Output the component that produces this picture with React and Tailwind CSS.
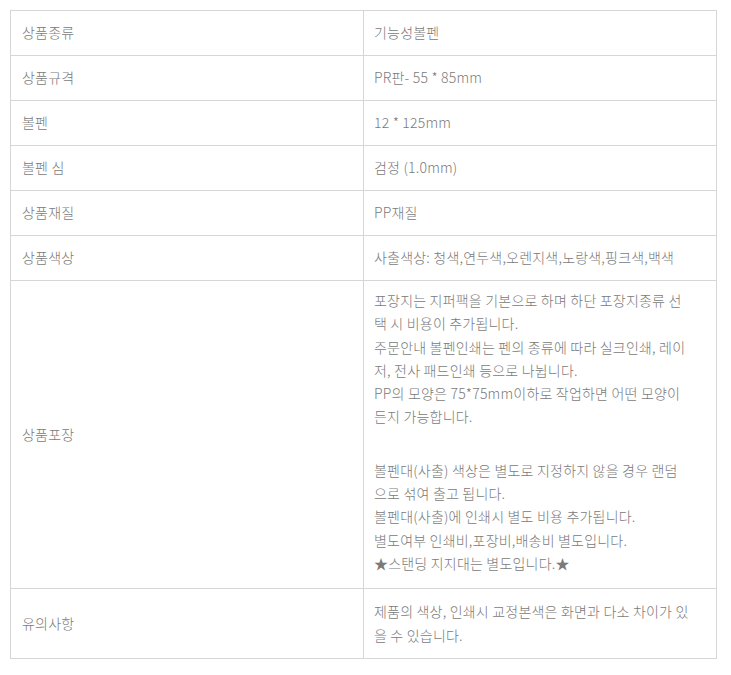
export default function App() {
  const rows = [
    ["상품종류", ["기능성볼펜"]],
    ["상품규격", ["PR판- 55 * 85mm"]],
    ["볼펜", ["12 * 125mm"]],
    ["볼펜 심", ["검정 (1.0mm)"]],
    ["상품재질", ["PP재질"]],
    ["상품색상", ["사출색상: 청색,연두색,오렌지색,노랑색,핑크색,백색"]],
  ];
  const pack1 = [
    "포장지는 지퍼팩을 기본으로 하며 하단 포장지종류 선",
    "택 시 비용이 추가됩니다.",
    "주문안내 볼펜인쇄는 펜의 종류에 따라 실크인쇄, 레이",
    "저, 전사 패드인쇄 등으로 나뉩니다.",
    "PP의 모양은 75*75mm이하로 작업하면 어떤 모양이",
    "든지 가능합니다.",
  ];
  const pack2 = [
    "볼펜대(사출) 색상은 별도로 지정하지 않을 경우 랜덤",
    "으로 섞여 출고 됩니다.",
    "볼펜대(사출)에 인쇄시 별도 비용 추가됩니다.",
    "별도여부 인쇄비,포장비,배송비 별도입니다.",
    "★스탠딩 지지대는 별도입니다.★",
  ];
  const note = ["제품의 색상, 인쇄시 교정본색은 화면과 다소 차이가 있", "을 수 있습니다."];
  const td = "border border-[#d6d6d6] align-middle";
  return (
    <div
      className="bg-white w-[731px] h-[675px] pt-[10px] pl-[10px] text-[#7a7a7a] text-[14px] font-light tracking-[0.2px]"
      style={{ fontFamily: '"Malgun Gothic", "Noto Sans CJK KR", "Noto Sans", sans-serif' }}
    >
      <table className="border-collapse w-[707px] table-fixed">
        <colgroup>
          <col className="w-[353px]" />
          <col />
        </colgroup>
        <tbody>
          {rows.map(([k, v]) => (
            <tr key={k} className="h-[45px]">
              <td className={`${td} pl-[11px] pb-[2px]`}>{k}</td>
              <td className={`${td} pl-[10px] pb-[2px]`}>{v[0]}</td>
            </tr>
          ))}
          <tr className="h-[308px]">
            <td className={`${td} pl-[11px]`}>상품포장</td>
            <td className={`${td} pl-[10px] pt-[8px] pb-[13px] leading-[23.3px]`}>
              {pack1.map((l) => (
                <div key={l} className="whitespace-nowrap">{l}</div>
              ))}
              <div className="h-[30px]" />
              {pack2.map((l) => (
                <div key={l} className="whitespace-nowrap">{l}</div>
              ))}
            </td>
          </tr>
          <tr className="h-[70px]">
            <td className={`${td} pl-[11px]`}>유의사항</td>
            <td className={`${td} pl-[10px] leading-[23.3px]`}>
              {note.map((l) => (
                <div key={l} className="whitespace-nowrap">{l}</div>
              ))}
            </td>
          </tr>
        </tbody>
      </table>
    </div>
  );
}
